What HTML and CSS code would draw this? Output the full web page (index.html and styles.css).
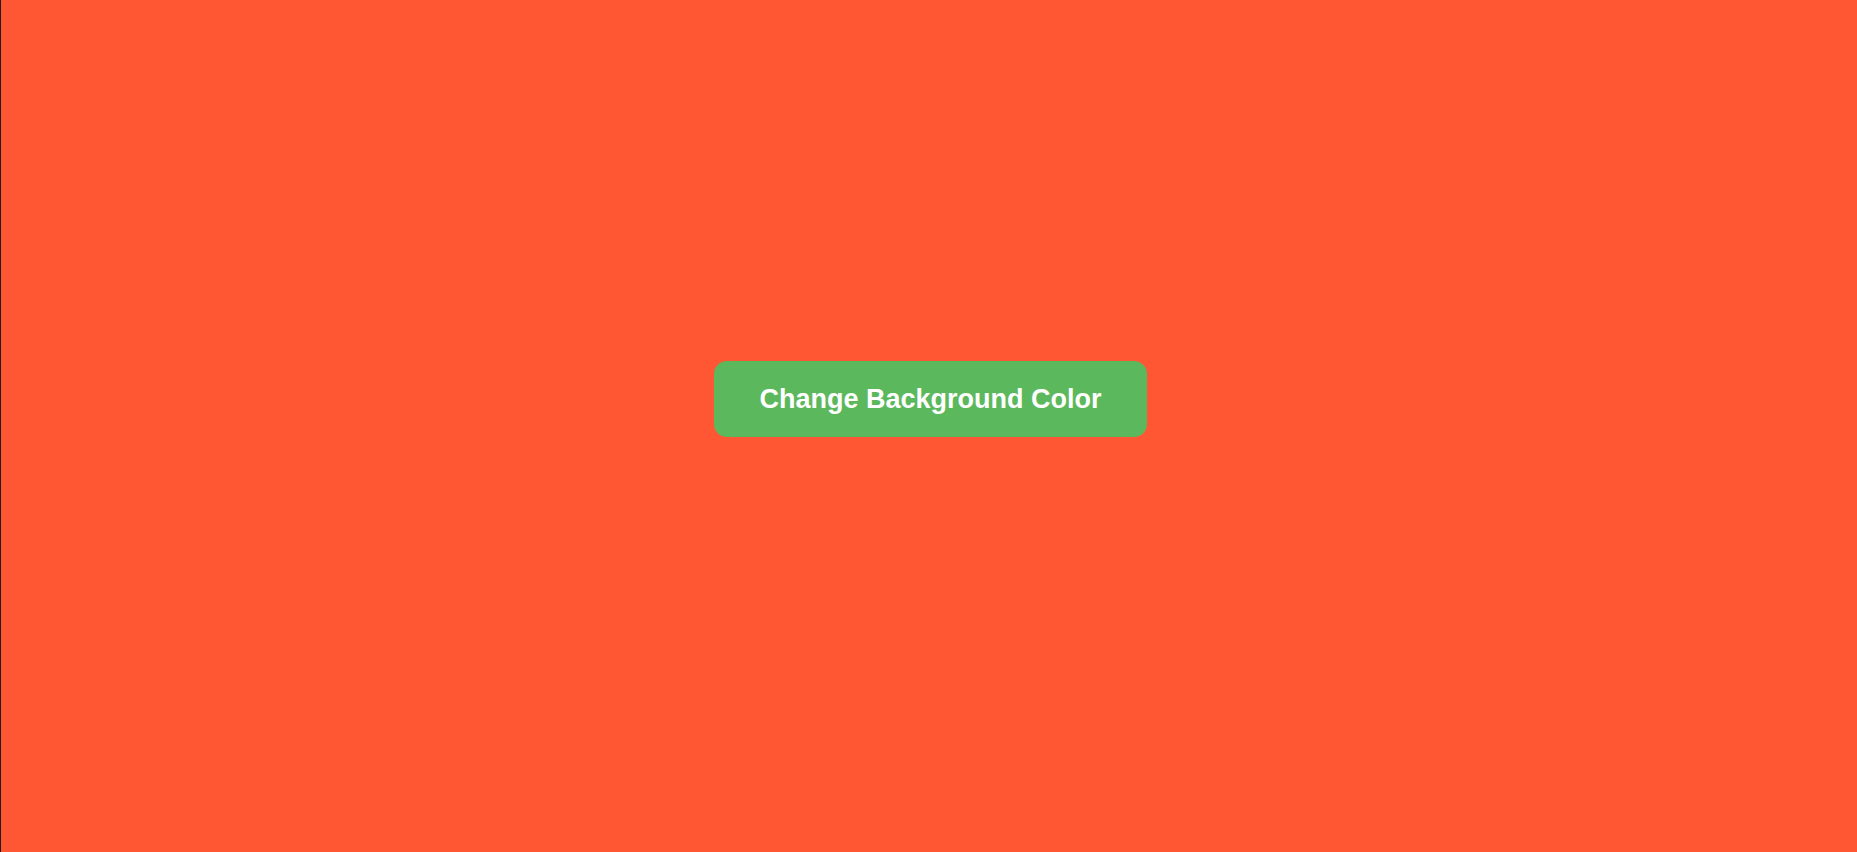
FILE: index.html
```html
<!DOCTYPE html>
<html>
<head>
<meta charset="utf-8">
<link rel="stylesheet" href="styles.css">
</head>
<body>
<div class="stage">
  <button class="change-btn">Change Background Color</button>
</div>
</body>
</html>
```
FILE: styles.css
```css
html, body {
  margin: 0;
  height: 100%;
}
body {
  background: #ff5733;
  border-left: 1px solid #1e1e1e;
  box-sizing: border-box;
}
.stage {
  display: flex;
  justify-content: center;
  align-items: flex-start;
  padding-top: 361px;
  padding-left: 3px;
}
.change-btn {
  width: 433px;
  height: 76px;
  background: #5cb85c;
  color: #ffffff;
  border: none;
  border-radius: 13px;
  font-family: "Liberation Sans", Arial, sans-serif;
  font-weight: bold;
  font-size: 27px;
  padding: 0;
  cursor: pointer;
}
```
